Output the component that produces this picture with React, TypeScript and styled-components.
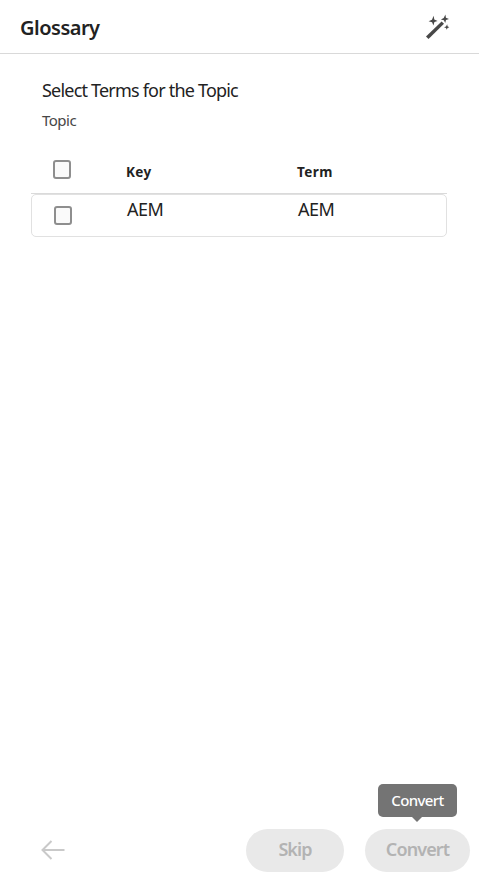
import React from "react";
import styled, { createGlobalStyle } from "styled-components";

const GlobalStyle = createGlobalStyle`
  * { box-sizing: border-box; }
  body {
    margin: 0;
    background: #fff;
    color: #222;
    font-family: "Noto Sans", "Open Sans", sans-serif;
  }
`;

const Panel = styled.main`
  display: flex;
  flex-direction: column;
  height: 882px;
  width: 479px;
  overflow: hidden;
`;

const Header = styled.header`
  display: flex;
  align-items: center;
  justify-content: space-between;
  height: 54px;
  padding: 0 29px 0 20px;
  border-bottom: 1px solid #d9d9d9;
`;

const Title = styled.h1`
  margin: 2px 0 0;
  font-size: 20px;
  font-weight: 600;
  line-height: 28px;
  letter-spacing: -0.5px;
`;

const Content = styled.section`
  flex: 1;
  padding: 23px 32px 0 31px;
`;

const Heading = styled.h2`
  margin: 0 0 0 11px;
  font-size: 18px;
  font-weight: 400;
  line-height: 26px;
  letter-spacing: -0.8px;
  white-space: nowrap;
`;

const Subheading = styled.p`
  margin: 6px 0 0 11px;
  font-size: 15px;
  line-height: 22px;
  letter-spacing: -0.5px;
  color: #464646;
`;

const TableHead = styled.div`
  display: grid;
  grid-template-columns: 94px 171px 1fr;
  height: 63px;
  border-bottom: 1px solid #dadada;
`;

const HeadCell = styled.div`
  padding: 31px 0 0 1px;
  font-size: 13.5px;
  font-weight: 700;
  line-height: 20px;
  letter-spacing: 0.4px;
`;

const TableRow = styled.div`
  display: grid;
  grid-template-columns: 94px 171px 1fr;
  height: 43px;
  border: 1px solid #e1e1e1;
  border-radius: 5px;
`;

const Cell = styled.div`
  padding: 1px 0 0 1px;
  font-size: 18px;
  line-height: 26px;
  letter-spacing: -0.5px;
`;

const Checkbox = styled.span<{ $top: number }>`
  display: block;
  width: 18px;
  height: 19px;
  margin: ${(p) => p.$top}px 0 0 22px;
  border: 2px solid #8e8e8e;
  border-radius: 3px;
  background: #fafafa;
`;

const Footer = styled.footer`
  display: flex;
  align-items: center;
  height: 53px;
  padding: 0 9px 10px 41px;
`;

const BackIcon = styled.svg`
  margin: 0 auto 2px 0;
`;

const Pill = styled.button<{ $width: number }>`
  position: relative;
  width: ${(p) => p.$width}px;
  height: 43px;
  margin-left: 21px;
  padding: 0 0 3px;
  border: 0;
  border-radius: 22px;
  background: #e9e9e9;
  color: #b3b3b3;
  font: inherit;
  font-size: 18px;
  font-weight: 600;
  letter-spacing: -0.9px;
`;

const Tooltip = styled.span`
  position: absolute;
  left: 13px;
  bottom: 55px;
  width: 79px;
  height: 33px;
  border-radius: 5px;
  background: #747474;
  color: #fff;
  font-size: 15px;
  font-weight: 500;
  line-height: 33px;
  letter-spacing: -0.6px;
  text-align: center;

  &::after {
    content: "";
    position: absolute;
    top: 33px;
    left: 34px;
    border: 5px solid transparent;
    border-top-color: #747474;
    border-bottom: 0;
  }
`;

function Wand() {
  return (
    <svg width="25" height="26" viewBox="0 0 25 26" fill="#484848">
      <path d="M16.600 7.400 19 9.800 3.500 25 1 22.500Z" />
      <path d="M8.600 1.800 9.300 5.600 12.600 7 9.400 7.900 8.400 11.400 7.100 8.200 3.600 7.200 7 5.700ZM20.400.6 20.900 3.800 24 5 21 6 20.200 9 18.900 6.200 15.900 5.400 18.700 4ZM22.200 10.300 22.500 12.300 24.300 13.200 22.500 13.900 21.800 15.800 21 14 19 13.300 21 12.400Z" />
    </svg>
  );
}

export default function App() {
  return (
    <>
      <GlobalStyle />
      <Panel>
        <Header>
          <Title>Glossary</Title>
          <Wand />
        </Header>
        <Content>
          <Heading>Select Terms for the Topic</Heading>
          <Subheading>Topic</Subheading>
          <TableHead>
            <Checkbox $top={29} />
            <HeadCell>Key</HeadCell>
            <HeadCell>Term</HeadCell>
          </TableHead>
          <TableRow>
            <Checkbox $top={11} />
            <Cell>AEM</Cell>
            <Cell>AEM</Cell>
          </TableRow>
        </Content>
        <Footer>
          <BackIcon width="24" height="22" viewBox="0 0 24 22" fill="none" stroke="#c9c9c9" strokeWidth="2">
            <path d="M23.500 11H1.500M10.500 2l-9 9 9 9" />
          </BackIcon>
          <Pill $width={98}>Skip</Pill>
          <Pill $width={105}>
            Convert
            <Tooltip>Convert</Tooltip>
          </Pill>
        </Footer>
      </Panel>
    </>
  );
}
